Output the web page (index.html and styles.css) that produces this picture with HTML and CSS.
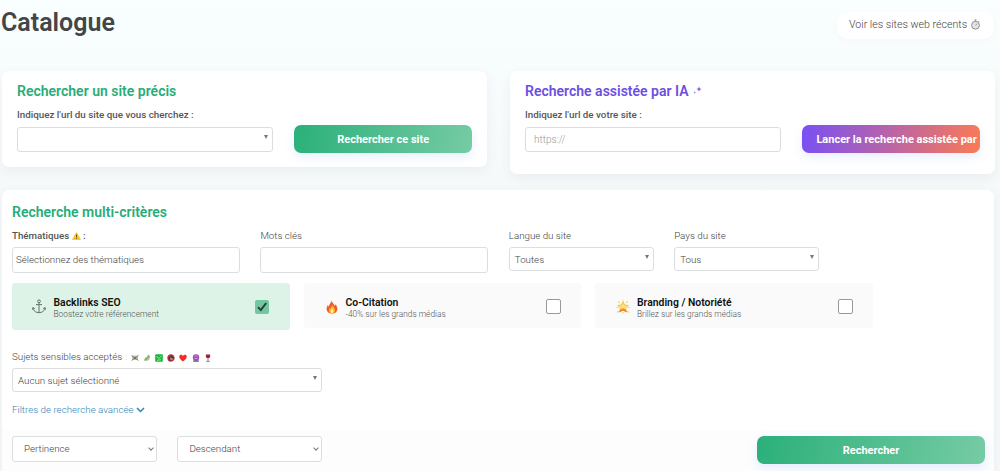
FILE: index.html
```html
<!DOCTYPE html>
<html lang="fr">
<head>
    <meta charset="UTF-8">
    <meta name="viewport" content="width=device-width, initial-scale=1.0">
    <title>Catalogue</title>
    <link rel="stylesheet" href="styles.css">
</head>
<body>
    <!-- En-tête -->
    <header class="page-header">
        <h1>Catalogue</h1>
        <a href="#" class="recent-link">
            <span>Voir les sites web récents</span>
            <svg class="icon-timer" viewBox="0 0 12 12"><circle cx="6" cy="6.8" r="4.3" fill="#e4e4e4" stroke="#888" stroke-width="1"/><path d="M4.8 1h2.4M6 1v1.5M9.3 2.4l1 1M6 6.8l1.8-1.6" fill="none" stroke="#888" stroke-width=".9"/></svg>
        </a>
    </header>

    <!-- Recherches rapides -->
    <section class="quick-search">
        <div class="card card-site">
            <h2>Rechercher un site précis</h2>
            <label class="label-bold">Indiquez l'url du site que vous cherchez :</label>
            <div class="quick-row">
                <div class="field quick-field"><span></span><i class="arrow"></i></div>
                <button class="btn btn-green">Rechercher ce site</button>
            </div>
        </div>
        <div class="card card-ia">
            <h2 class="title-ia">Recherche assistée par IA
                <svg class="icon-sparkle" viewBox="0 0 9 9"><path d="M6 .4l.7 2 2 .7-2 .7-.7 2-.7-2-2-.7 2-.7z" fill="#6a4de0"/><path d="M1.8 4.9l.4 1.1 1.1.4-1.1.4-.4 1.1-.4-1.1L.3 6.4 1.4 6z" fill="#9a86ea"/></svg>
            </h2>
            <label class="label-bold">Indiquez l'url de votre site :</label>
            <div class="quick-row">
                <input class="field quick-field" type="text" placeholder="https://">
                <button class="btn btn-ia">Lancer la recherche assistée par</button>
            </div>
        </div>
    </section>

    <!-- Recherche multi-critères -->
    <section class="card criteria">
        <h2>Recherche multi-critères</h2>
        <div class="criteria-row">
            <div class="col-wide">
                <label class="label-bold">Thématiques <svg class="icon-warning" viewBox="0 0 10 9"><path d="M5 .8L9.4 8.4H.6z" fill="#fcc419" stroke="#fcc419" stroke-linejoin="round"/><path d="M5 3v2.8M5 6.6v1.1" stroke="#4a3b10" stroke-width="1"/></svg> :</label>
                <div class="field field-tags"><span>Sélectionnez des thématiques</span></div>
            </div>
            <div class="col-wide">
                <label>Mots clés</label>
                <input class="field" type="text">
            </div>
            <div class="col-small">
                <label>Langue du site</label>
                <div class="field field-select"><span>Toutes</span><i class="arrow"></i></div>
            </div>
            <div class="col-small">
                <label>Pays du site</label>
                <div class="field field-select"><span>Tous</span><i class="arrow"></i></div>
            </div>
        </div>

        <div class="options">
            <div class="option option-active">
                <svg class="icon-option" viewBox="0 0 14 15"><circle cx="7" cy="2.3" r="1.4"/><path d="M7 3.7v10M4 5.6h6M.8 8.6l.4 1.6c.9 2 3 3.4 5.8 3.5 2.800-.1 4.900-1.500 5.800-3.500l.4-1.600M.5 10.600l.5-2 1.900 1.300M13.500 10.600l-.5-2-1.900 1.300"/></svg>
                <div class="option-text">
                    <strong>Backlinks SEO</strong>
                    <small>Boostez votre référencement</small>
                </div>
                <span class="checkbox checked"><svg viewBox="0 0 14 14"><path d="M3 7.200l2.800 2.900L11.200 3" fill="none" stroke="#263b32" stroke-width="1.900"/></svg></span>
            </div>
            <div class="option">
                <svg class="icon-emoji" viewBox="0 0 12 14"><path d="M5.500.500c.4 2.300 2.700 3.300 3.200 5.400.5-.5.600-1.200.6-1.700C11 6 11.500 7.800 11.400 9.200 11.200 12 9 13.500 6 13.500S.800 12 .600 9.200C.500 7.400 1.400 5.900 2 4.800c.1 1 .4 1.500.9 1.900C3 4.200 5.400 3 5.500.500z" fill="#f4582a"/><path d="M6.200 4.500c.2 2.100 3 3.300 2.900 5.600 0 2-1.300 3.100-3.100 3.100S2.900 12 2.900 10.200c0-1.100.6-2 1-2.700.2.700.5 1 .9 1.200.1-1.700 1.400-2.500 1.400-4.200z" fill="#ffb52b"/><path d="M6.200 8.300c.2 1.200 1.400 1.700 1.300 3-.1 1-.7 1.600-1.500 1.600s-1.500-.6-1.500-1.500c0-1.200 1.500-1.800 1.700-3.100z" fill="#fff0a0"/></svg>
                <div class="option-text">
                    <strong>Co-Citation</strong>
                    <small>-40% sur les grands médias</small>
                </div>
                <span class="checkbox"></span>
            </div>
            <div class="option">
                <svg class="icon-emoji" viewBox="0 0 14 14"><path d="M7 1.800l1.600 3.200 3.700.5-2.700 2.600.7 3.700L7 10.200l-3.300 1.600.7-3.700L1.700 5.500 5.400 5z" fill="#fde07a" stroke="#f6b52c" stroke-width=".8"/><path d="M2.800 12.600l1.300-3.200L7 8.300l2.900 1.100 1.300 3.200L7 10.800z" fill="#f28c28"/><path d="M7 .200v1.200M2.300 1.200l1.300 1.800M11.700 1.200l-1.300 1.800M.300 7.500l1.500.1M13.700 7.500l-1.500.1M1 12.400l1.500-1.200M13 12.400l-1.500-1.200M7 12v1.600" stroke="#f7ce55" stroke-width="1.100"/></svg>
                <div class="option-text">
                    <strong>Branding / Notoriété</strong>
                    <small>Brillez sur les grands médias</small>
                </div>
                <span class="checkbox"></span>
            </div>
        </div>

        <div class="sensitive">
            <label>Sujets sensibles acceptés<span class="colon">:</span>
                <span class="topics">
                    <svg viewBox="0 0 8 8"><path d="M1 1.500h6v4.500H1z" fill="#bcc4ae"/><path d="M.500 1.500l7 5M7.500 1.500l-7 5" stroke="#6c7563" stroke-width=".8"/><circle cx="4" cy="4" r="1.200" fill="#6c7563"/></svg>
                    <svg viewBox="0 0 8 8"><path d="M4.500 1C6 .200 7.500 1 7 3.500 6.600 6 5 7.300 2.600 7L.600 5l2-.800L2 2.800l2 .4z" fill="#a9c88a"/><path d="M1.500 6.500L6 2.200" stroke="#5d8a46" stroke-width=".8"/></svg>
                    <svg viewBox="0 0 8 8"><rect x=".2" y=".2" width="7.600" height="7.600" rx="1" fill="#16b83a"/><path d="M1.500 2l2 2.500L6.500 2M2 6.300l4-.6" fill="none" stroke="#b3f0bc" stroke-width=".8"/></svg>
                    <svg viewBox="0 0 8 8"><circle cx="4" cy="4" r="3.100" fill="#5b3434" stroke="#c02c39" stroke-width="1.100"/><path d="M1.800 1.800l4.400 4.400" stroke="#d83a48"/><path d="M3.200 5h2.400" stroke="#e8cfcb"/></svg>
                    <svg viewBox="0 0 8 8"><path d="M4 7.500C1.500 5.600.300 4.300.300 2.700.300.500 3 .200 4 2 5 .200 7.700.500 7.700 2.700 7.700 4.300 6.500 5.600 4 7.500z" fill="#ee2f24"/></svg>
                    <svg viewBox="0 0 8 8"><circle cx="4" cy="3.500" r="3.200" fill="#a04bbd"/><path d="M1.500 6.300h5l.5 1.400H1z" fill="#76508c"/><path d="M2.500 2.600l1.500-.9 1.600 1M2.300 4.500h3.300" fill="none" stroke="#dfb5ef" stroke-width=".7"/></svg>
                    <svg viewBox="0 0 8 8"><path d="M1.900.500h4.200c.5 2.400-.3 3.700-2.100 3.800C2.200 4.200 1.400 2.900 1.900.500z" fill="#a81d3d"/><path d="M4 4.200v3M2.300 7.400h3.400" stroke="#8e5260" stroke-width=".8"/></svg>
                </span>
            </label>
            <div class="field field-select"><span>Aucun sujet sélectionné</span><i class="arrow"></i></div>
        </div>

        <a href="#" class="advanced">Filtres de recherche avancée <svg viewBox="0 0 9 6"><path d="M1 1l3.500 3.500L8 1" fill="none" stroke="#2f86ad" stroke-width="1.500"/></svg></a>

        <div class="actions">
            <div class="field field-sort"><span>Pertinence</span><i class="chevron"></i></div>
            <div class="field field-sort"><span>Descendant</span><i class="chevron"></i></div>
            <button class="btn btn-green btn-submit">Rechercher</button>
        </div>
    </section>
</body>
</html>
```
FILE: styles.css
```css
/* Style global */
* {
    box-sizing: border-box;
}

body {
    margin: 0;
    height: 471px;
    overflow: hidden;
    font-family: Roboto, 'Liberation Sans', sans-serif;
    font-size: 9.75px;
    font-weight: 300;
    color: #444;
    background: linear-gradient(#f9fefe, #f5f9fa 190px);
}

h1, h2 {
    margin: 0;
}

svg {
    flex: none;
}

/* En-tête */
.page-header {
    display: flex;
    justify-content: space-between;
    height: 71px;
    padding: 0 6px 0 1px;
}

h1 {
    margin-top: 8px;
    font-size: 25px;
    line-height: 30px;
    font-weight: 600;
    color: #444547;
}

.recent-link {
    display: flex;
    align-items: center;
    gap: 4px;
    width: 157px;
    height: 27px;
    margin-top: 12px;
    padding: 0 0 2px 12px;
    border-radius: 10px;
    background: #fff;
    box-shadow: 0 2px 5px rgba(90, 90, 90, 0.03);
    font-size: 10.65px;
    color: #444;
    text-decoration: none;
    white-space: nowrap;
}

.icon-timer {
    width: 11px;
    height: 11px;
    margin-left: -1px;
}

/* Cartes */
.card {
    background: #fff;
    border-radius: 7px;
    box-shadow: 0 4px 12px rgba(70, 90, 100, 0.07);
}

h2 {
    font-size: 14px;
    line-height: 18px;
    font-weight: 600;
    color: #27ad77;
    white-space: nowrap;
}

.title-ia {
    color: #6d4fe0;
}

.icon-sparkle {
    width: 9px;
    height: 9px;
    margin-left: 1px;
    vertical-align: 1px;
}

label {
    display: block;
    height: 14px;
    line-height: 14px;
    white-space: nowrap;
}

.label-bold {
    font-weight: 500;
    color: #555;
}

.quick-search {
    display: flex;
    align-items: flex-start;
    gap: 23px;
    height: 119px;
    padding-left: 2px;
}

.quick-search .card {
    width: 485px;
    height: 96px;
    padding: 11px 15px;
}

.quick-search .card-ia {
    height: 103px;
}

.quick-search label {
    margin-top: 8px;
    font-size: 9.8px;
}

.quick-row {
    display: flex;
    gap: 21px;
    margin-top: 3px;
}

/* Champs */
.field {
    display: flex;
    align-items: center;
    justify-content: space-between;
    width: 100%;
    height: 26px;
    padding: 0 4px;
    border: 1px solid #dcddde;
    border-radius: 3px;
    background: #fff;
    font-family: inherit;
    font-size: 9.75px;
    font-weight: 300;
    color: #444;
    white-space: nowrap;
}

.quick-field {
    width: 257px;
    height: 25px;
    margin-top: 2px;
    padding: 0 4px 0 8px;
    font-size: 10px;
}

.quick-field::placeholder {
    color: #999;
}

.field-tags {
    padding: 0 0 2px 3px;
}

.field-select {
    height: 24px;
    padding-left: 5px;
}

.arrow {
    margin-top: -5px;
    border: 2.5px solid transparent;
    border-top: 4px solid #777;
    border-bottom: 0;
}

/* Boutons */
.btn {
    width: 178px;
    height: 28px;
    padding: 0;
    border: 0;
    border-radius: 7px;
    box-shadow: 0 4px 10px rgba(100, 150, 255, 0.16);
    font-family: inherit;
    font-size: 11px;
    font-weight: 700;
    color: #fff;
    white-space: nowrap;
}

.btn-green {
    background: linear-gradient(100deg, #2bb07a, #76cba4);
}

.btn-ia {
    padding-left: 14px;
    overflow: hidden;
    text-align: left;
    background: linear-gradient(100deg, #7850f5, #fb7a55);
}

/* Recherche multi-critères */
.criteria {
    width: 992px;
    height: 300px;
    margin-left: 2px;
    padding: 13px 9px 0 10px;
}

.criteria-row {
    display: flex;
    gap: 20.4px;
    margin-top: 8px;
}

.col-wide {
    width: 228px;
}

.col-small {
    width: 145px;
}

.col-wide .field,
.col-small .field {
    margin-top: 4px;
}

.icon-warning {
    width: 9px;
    height: 8px;
    vertical-align: -1px;
}

/* Options */
.options {
    display: flex;
    gap: 14px;
    margin-top: 10px;
}

.option {
    display: flex;
    align-items: center;
    width: 277.5px;
    height: 45px;
    padding: 2px 20px 0 21px;
    border-radius: 3px;
    background: #fafafa;
}

.option-active {
    height: 47px;
    padding: 0 21px 0 20px;
    background: #ddf3e7;
}

.icon-option,
.icon-emoji {
    width: 14px;
    height: 15px;
    margin-right: 7.5px;
}

.icon-option {
    fill: none;
    stroke: #66736d;
    stroke-width: 1;
}

.icon-emoji {
    height: 14px;
    margin-right: 7px;
}

.option-text {
    flex: 1;
    padding-top: 3px;
    white-space: nowrap;
}

.option-text strong,
.option-text small {
    display: block;
    line-height: 12px;
}

.option-text strong {
    font-size: 10.4px;
    font-weight: 600;
    color: #111;
}

.option-text small {
    font-size: 8.35px;
    line-height: 11px;
    color: #555;
}

.checkbox {
    width: 15px;
    height: 15px;
    border: 1px solid #999;
    border-radius: 2px;
    background: #fff;
}

.checkbox.checked {
    width: 14px;
    height: 14px;
    border: 0;
    background: #72c6a0;
}

.checked svg {
    display: block;
}

/* Sujets sensibles */
.sensitive {
    width: 310px;
    margin-top: 20px;
}

.sensitive .field {
    margin-top: 4px;
    padding-left: 5px;
}

.colon {
    margin-left: 3px;
    color: #bbb;
}

.topics {
    display: inline-flex;
    gap: 4.2px;
    margin-left: 1px;
    vertical-align: -1.5px;
}

.topics svg {
    width: 8px;
    height: 8px;
}

.advanced {
    display: block;
    height: 14px;
    margin-top: 11px;
    line-height: 14px;
    color: #3382b5;
    text-decoration: none;
}

.advanced svg {
    width: 9px;
    height: 6px;
}

/* Tri et validation */
.actions {
    display: flex;
    gap: 20.4px;
    height: 50px;
    margin: 13px -9px 0 -10px;
    padding: 6px 9px 0 10px;
    background: #fdfdfe;
}

.field-sort {
    width: 145px;
    padding: 0 3px 2px 11px;
}

.chevron {
    width: 4px;
    height: 4px;
    margin-top: -1px;
    border: solid #777;
    border-width: 0 1px 1px 0;
    transform: rotate(45deg);
}

.btn-submit {
    width: 228px;
    margin-left: auto;
}
```
